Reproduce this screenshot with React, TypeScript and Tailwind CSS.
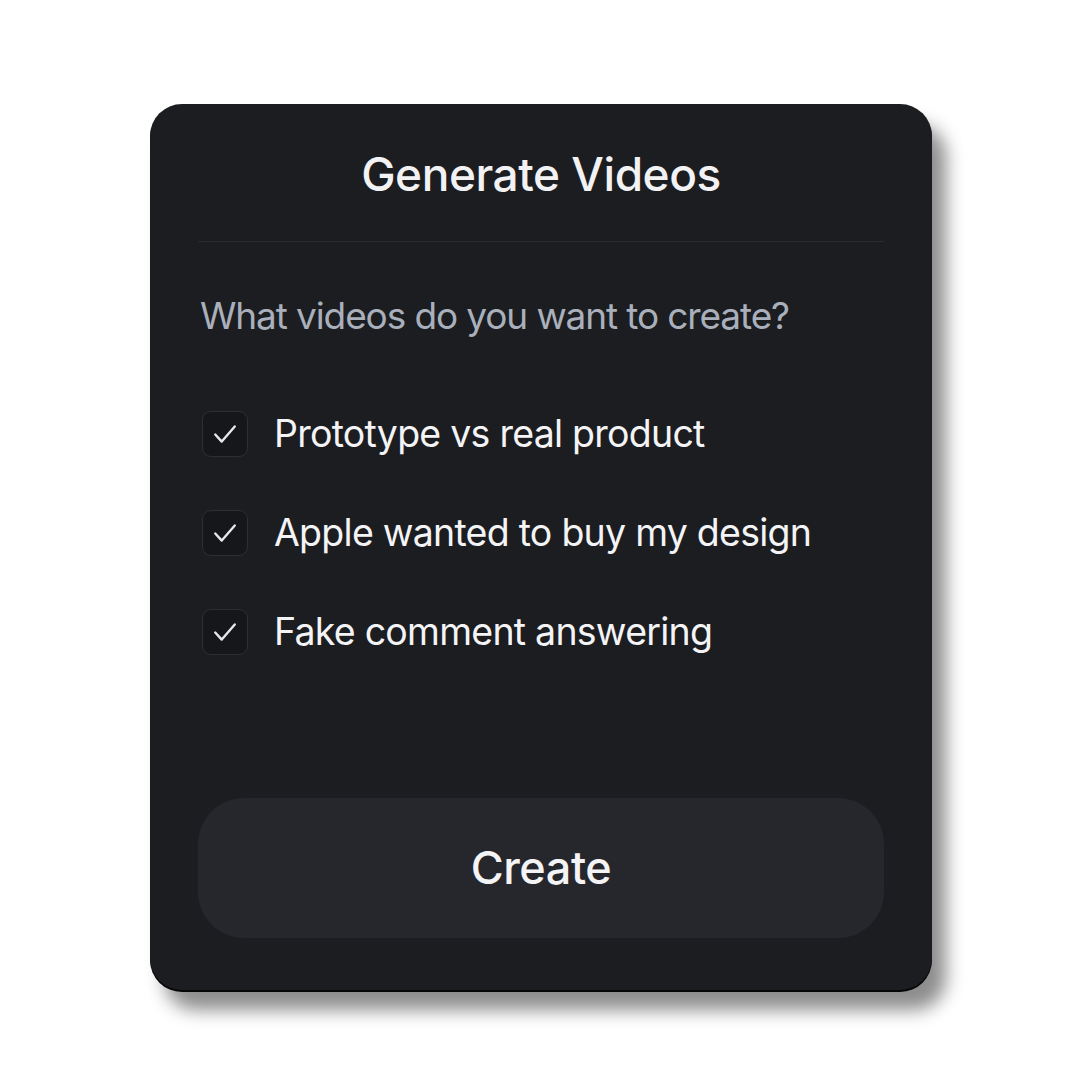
import React from 'react';

const items = ['Prototype vs real product', 'Apple wanted to buy my design', 'Fake comment answering'];

const CheckIcon: React.FC = () => (
  <svg width="26" height="26" viewBox="0 0 24 24" fill="none" stroke="currentColor" strokeWidth="2.2" strokeLinecap="round" strokeLinejoin="round">
    <path d="M3 12.5l6 6.5L21 5" />
  </svg>
);

const App: React.FC = () => {
  return (
    <div className="w-full h-[1080px] bg-white flex justify-center pt-[104px]" style={{ fontFamily: 'Inter, "Noto Sans", sans-serif' }}>
      <div className="w-[782px] h-[886px] ml-[2px] bg-[#1c1d21] rounded-[32px] flex flex-col px-[48px] shadow-[0_2px_0_#050506,14px_20px_18px_rgba(0,0,0,0.45)]">
        <div className="h-[138px] pt-[4px] flex items-center justify-center border-b border-[#2a2b30]">
          <h1 className="text-[46px] font-medium text-[#f2f2f4] tracking-[-0.01em]">Generate Videos</h1>
        </div>
        <p className="mt-[52px] text-[37px] leading-[44px] text-[#a9b0bb] tracking-[-0.03em] pl-[2px]">What videos do you want to create?</p>
        <ul className="mt-[73px] flex flex-col gap-[53px] pl-[4px]">
          {items.map((item, index) => (
            <li key={index} className="flex items-center h-[46px]">
              <span className="w-[46px] h-[46px] rounded-[9px] border-[1.5px] border-[#2e2f35] bg-[#16171a] flex items-center justify-center text-[#e8e8ea] shrink-0">
                <CheckIcon />
              </span>
              <span className="ml-[26px] text-[37.5px] text-[#f4f4f6] tracking-[-0.02em]">{item}</span>
            </li>
          ))}
        </ul>
        <div className="mt-auto pb-[52px]">
          <button className="w-full h-[140px] rounded-[46px] bg-[#26272c] text-[45px] font-medium text-[#f4f4f6] tracking-[-0.01em]">
            Create
          </button>
        </div>
      </div>
    </div>
  );
};

export default App;
